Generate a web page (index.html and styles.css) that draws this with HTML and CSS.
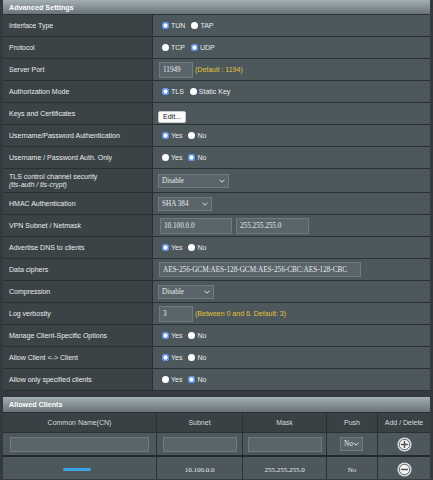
FILE: index.html
```html
<!DOCTYPE html>
<html>
<head>
<meta charset="utf-8">
<link rel="stylesheet" href="styles.css">
</head>
<body>
<div class="page">
  <section class="panel">
    <div class="panel-head">Advanced Settings</div>

    <div class="row"><div class="label">Interface Type</div>
      <div class="value"><span class="radio on"></span><span class="opt">TUN</span><span class="radio"></span><span class="opt">TAP</span></div></div>

    <div class="row"><div class="label">Protocol</div>
      <div class="value"><span class="radio"></span><span class="opt">TCP</span><span class="radio on"></span><span class="opt">UDP</span></div></div>

    <div class="row"><div class="label">Server Port</div>
      <div class="value"><span class="field w34">11949</span><span class="hint">(Default : 1194)</span></div></div>

    <div class="row"><div class="label">Authorization Mode</div>
      <div class="value"><span class="radio on"></span><span class="opt">TLS</span><span class="radio"></span><span class="opt">Static Key</span></div></div>

    <div class="row"><div class="label">Keys and Certificates</div>
      <div class="value"><span class="button">Edit...</span></div></div>

    <div class="row"><div class="label">Username/Password Authentication</div>
      <div class="value"><span class="radio on"></span><span class="opt">Yes</span><span class="radio"></span><span class="opt">No</span></div></div>

    <div class="row"><div class="label">Username / Password Auth. Only</div>
      <div class="value"><span class="radio"></span><span class="opt">Yes</span><span class="radio on"></span><span class="opt">No</span></div></div>

    <div class="row tall"><div class="label"><span>TLS control channel security</span><em>(tls-auth / tls-crypt)</em></div>
      <div class="value"><span class="select w71">Disable<svg class="chev" viewBox="0 0 6 4"><polyline points="0.5,0.8 3,3.2 5.5,0.8"/></svg></span></div></div>

    <div class="row"><div class="label">HMAC Authentication</div>
      <div class="value"><span class="select w54">SHA 384<svg class="chev" viewBox="0 0 6 4"><polyline points="0.5,0.8 3,3.2 5.5,0.8"/></svg></span></div></div>

    <div class="row"><div class="label">VPN Subnet / Netmask</div>
      <div class="value"><span class="field w72 ml1">10.100.0.0</span><span class="field w73 ml4">255.255.255.0</span></div></div>

    <div class="row"><div class="label">Advertise DNS to clients</div>
      <div class="value"><span class="radio on"></span><span class="opt">Yes</span><span class="radio"></span><span class="opt">No</span></div></div>

    <div class="row"><div class="label">Data ciphers</div>
      <div class="value"><span class="field w202">AES-256-GCM:AES-128-GCM:AES-256-CBC:AES-128-CBC</span></div></div>

    <div class="row"><div class="label">Compression</div>
      <div class="value"><span class="select w56">Disable<svg class="chev" viewBox="0 0 6 4"><polyline points="0.5,0.8 3,3.2 5.5,0.8"/></svg></span></div></div>

    <div class="row"><div class="label">Log verbosity</div>
      <div class="value"><span class="field w34">3</span><span class="hint">(Between 0 and 6. Default: 3)</span></div></div>

    <div class="row"><div class="label">Manage Client-Specific Options</div>
      <div class="value"><span class="radio on"></span><span class="opt">Yes</span><span class="radio"></span><span class="opt">No</span></div></div>

    <div class="row"><div class="label">Allow Client &lt;-&gt; Client</div>
      <div class="value"><span class="radio on"></span><span class="opt">Yes</span><span class="radio"></span><span class="opt">No</span></div></div>

    <div class="row last"><div class="label">Allow only specified clients</div>
      <div class="value"><span class="radio"></span><span class="opt">Yes</span><span class="radio on"></span><span class="opt">No</span></div></div>
  </section>

  <section class="panel clients">
    <div class="panel-head">Allowed Clients</div>
    <div class="grid cols">
      <div class="cell">Common Name(CN)</div>
      <div class="cell">Subnet</div>
      <div class="cell">Mask</div>
      <div class="cell">Push</div>
      <div class="cell">Add / Delete</div>
    </div>
    <div class="grid inputs">
      <div class="cell"><span class="field w139"></span></div>
      <div class="cell"><span class="field w74"></span></div>
      <div class="cell"><span class="field w74"></span></div>
      <div class="cell"><span class="select w23">No<svg class="chev" viewBox="0 0 6 4"><polyline points="0.5,0.8 3,3.2 5.5,0.8"/></svg></span></div>
      <div class="cell"><svg class="icon" viewBox="0 0 16 16"><circle cx="8" cy="8" r="7.5" fill="#e4e6e7"/><circle cx="8" cy="8" r="5.6" fill="#f4f4f4" stroke="#4f575b" stroke-width="1"/><path d="M8 4.8v6.4M4.8 8h6.4" stroke="#4f575b" stroke-width="1.6" stroke-linecap="round"/></svg></div>
    </div>
    <div class="grid data">
      <div class="cell"><span class="redacted"></span></div>
      <div class="cell serif">10.100.0.0</div>
      <div class="cell serif">255.255.255.0</div>
      <div class="cell serif">No</div>
      <div class="cell"><svg class="icon" viewBox="0 0 16 16"><circle cx="8" cy="8" r="7.5" fill="#e4e6e7"/><circle cx="8" cy="8" r="5.6" fill="#f4f4f4" stroke="#4f575b" stroke-width="1"/><path d="M4.8 8h6.4" stroke="#4f575b" stroke-width="1.6" stroke-linecap="round"/></svg></div>
    </div>
  </section>
</div>
</body>
</html>
```

FILE: styles.css
```css
* { box-sizing: border-box; }
html, body { margin: 0; padding: 0; }
body {
  background: #343a3d;
  width: 433px;
  height: 480px;
  overflow: hidden;
  font-family: "Liberation Sans", Arial, sans-serif;
  font-size: 7px;
  color: #e9ecec;
}
.page { padding: 0 3px; display: flex; flex-direction: column; gap: 6px; }
.panel { display: flex; flex-direction: column; }
.panel-head {
  height: 15px;
  background: linear-gradient(#a4afb3, #68747a);
  border-bottom: 1px solid #2a3033;
  color: #fff;
  font-weight: bold;
  font-size: 7.2px;
  padding-left: 6px;
  display: flex;
  align-items: center;
}
.clients .panel-head { height: 16px; }

.row {
  display: grid;
  grid-template-columns: 150px 1fr;
  height: 22px;
  border-bottom: 1px solid #2a3033;
}
.row.tall { height: 24px; }
.label {
  background: #3c4347;
  border-right: 1px solid #2a3033;
  padding-left: 6px;
  display: flex;
  flex-direction: column;
  justify-content: center;
  line-height: 8px;
}
.label em { font-style: italic; }
.value {
  background: #4d585d;
  padding-left: 6px;
  display: flex;
  align-items: center;
}
.radio {
  width: 7px;
  height: 7px;
  border-radius: 50%;
  background: #fff;
  margin-left: 3px;
  margin-right: 2px;
  flex: none;
}
.radio.on {
  background: #fff;
  box-shadow: inset 0 0 0 1.3px #4485f2;
}
.opt { margin-right: 3px; }

.field, .select {
  height: 15px;
  background: #59656a;
  border: 1px solid #707b80;
  color: #e8eaeb;
  font-family: "Liberation Serif", "Times New Roman", serif;
  font-size: 7.2px;
  display: inline-flex;
  align-items: center;
  padding-left: 3px;
  flex: none;
}
.select { height: 14px; padding-right: 3px; justify-content: space-between; margin-left: -1px; }
.chev { width: 6px; height: 4px; fill: none; stroke: #dfe3e4; stroke-width: 1; }
.w23 { width: 23px; }
.w34 { width: 34px; height: 16px; }
.w54 { width: 54px; }
.w56 { width: 56px; }
.w71 { width: 71px; }
.w72 { width: 72px; height: 16px; }
.w73 { width: 73px; height: 16px; }
.w74 { width: 74px; }
.w139 { width: 139px; }
.w202 { width: 202px; }
.ml1 { margin-left: 1px; }
.ml4 { margin-left: 4px; }
.hint { color: #e3c23a; margin-left: 2px; }
.button {
  background: #fbfbfb;
  color: #111;
  border: 1px solid #c8c8c8;
  border-radius: 2px;
  height: 12px;
  width: 28px;
  display: inline-flex;
  align-items: center;
  justify-content: center;
  margin-left: -1px;
  margin-top: 6px;
}

.grid {
  display: grid;
  grid-template-columns: 154px 86px 84px 51px 52px;
}
.cell {
  border-right: 1px solid #2a3033;
  display: flex;
  align-items: center;
  justify-content: center;
}
.cell:last-child { border-right: none; }
.cols { height: 20px; background: #3a4144; border-bottom: 1px solid #2a3033; }
.cols .cell { color: #d6dadc; }
.inputs { height: 24px; background: #4d585d; border-bottom: 2px solid #23282a; }
.data { height: 22px; background: #4d585d; }
.data .cell { padding-top: 3px; }
.serif { font-family: "Liberation Serif", "Times New Roman", serif; color: #e8eaeb; }
.icon { width: 15px; height: 15px; }
.redacted {
  width: 28px;
  height: 3px;
  border-radius: 2px;
  background: #3aa3e6;
  filter: blur(0.5px);
  margin-left: -6px;
}
```
